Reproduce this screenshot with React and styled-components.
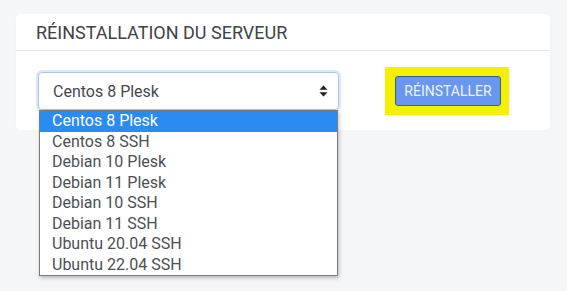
import React, { useState } from 'react'
import styled, { createGlobalStyle } from 'styled-components'

const GlobalStyle = createGlobalStyle`
    html, body {
        margin: 0;
        padding: 0;
        background: #f5f6f8;
        font-family: Roboto, "Liberation Sans", sans-serif;
    }
`

const Page = styled.div`
    padding: 14px 17px 0 16px;
    height: 291px;
    box-sizing: border-box;
`
const Card = styled.div`
    width: 534px;
    background: #fff;
    border-radius: 4px;
    box-shadow: 0 0 2px rgba(0, 0, 0, 0.03);
`
const Header = styled.div`
    height: 37px;
    box-sizing: border-box;
    padding: 9px 0 0 20px;
    border-bottom: 1px solid #e3e5e8;
    color: #3f4247;
    font-size: 18px;
    line-height: 20px;
`
const Body = styled.div`
    display: flex;
    align-items: center;
    padding: 16px 0 15px 22px;
`
const SelectWrap = styled.div`
    position: relative;
    width: 301px;
`
const SelectBox = styled.div`
    height: 38px;
    box-sizing: border-box;
    border: 1px solid #a9c6e8;
    border-radius: 4px;
    box-shadow: 0 0 0 2px rgba(150, 190, 235, 0.35);
    display: flex;
    align-items: center;
    justify-content: space-between;
    padding: 0 10px 0 14px;
    color: #45484d;
    font-size: 16px;
`
const Arrows = styled.svg`
    width: 9px;
    height: 12px;
`
const List = styled.ul`
    position: absolute;
    top: 100%;
    left: 1px;
    width: 299px;
    margin: 0;
    padding: 0;
    list-style: none;
    background: #fff;
    border: 1px solid #7b7b7b;
    box-shadow: 1px 2px 4px rgba(0, 0, 0, 0.25);
    box-sizing: border-box;
`
const Item = styled.li`
    height: 20.5px;
    line-height: 20.5px;
    padding-left: 12px;
    font-size: 16px;
    color: ${p => (p.$active ? '#fff' : '#4c4f54')};
    background: ${p => (p.$active ? '#2a8bf2' : 'transparent')};
`
const Highlight = styled.div`
    margin-left: 46px;
    padding: 9px 8px 9px 10px;
    background: #f4f000;
`
const Button = styled.button`
    width: 106px;
    height: 30px;
    border: 1px solid #3d5c8f;
    border-radius: 3px;
    background: #6797ee;
    color: #eef3fd;
    font-family: Roboto, "Liberation Sans", sans-serif;
    font-size: 14px;
    padding: 0;
    cursor: pointer;
`

const options = [
    'Centos 8 Plesk',
    'Centos 8 SSH',
    'Debian 10 Plesk',
    'Debian 11 Plesk',
    'Debian 10 SSH',
    'Debian 11 SSH',
    'Ubuntu 20.04 SSH',
    'Ubuntu 22.04 SSH'
]

const App = () => {
    const [selected] = useState(0)

    return (
        <Page>
            <GlobalStyle />
            <Card>
                <Header>RÉINSTALLATION DU SERVEUR</Header>
                <Body>
                    <SelectWrap>
                        <SelectBox>
                            <span>{options[selected]}</span>
                            <Arrows viewBox="0 0 9 12">
                                <path d="M4.5 0.5 L8.5 4.8 H0.5 Z" fill="#222" />
                                <path d="M4.5 11.5 L8.5 7.2 H0.5 Z" fill="#222" />
                            </Arrows>
                        </SelectBox>
                        <List>
                            {options.map((o, i) => (
                                <Item key={o} $active={i === selected}>{o}</Item>
                            ))}
                        </List>
                    </SelectWrap>
                    <Highlight>
                        <Button>RÉINSTALLER</Button>
                    </Highlight>
                </Body>
            </Card>
        </Page>
    )
}

export default App
